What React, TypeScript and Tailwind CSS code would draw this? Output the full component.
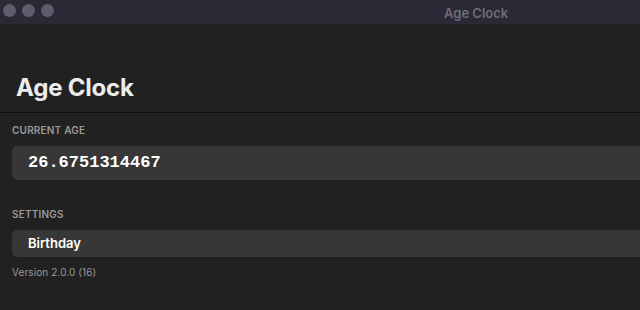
export default function App() {
  return (
    <div className="w-[640px] h-[310px] overflow-hidden bg-[#212121] flex flex-col" style={{ fontFamily: '"Inter", "Liberation Sans", sans-serif' }}>
      <div className="h-[25px] shrink-0 bg-[#2a2935] flex items-start relative border-b border-[#1c1c22]">
        <div className="flex gap-[6px] pl-[3px] pt-[4px]">
          <div className="w-[13px] h-[13px] rounded-full bg-[#5e5d6b]" />
          <div className="w-[13px] h-[13px] rounded-full bg-[#5e5d6b]" />
          <div className="w-[13px] h-[13px] rounded-full bg-[#5e5d6b]" />
        </div>
        <div className="absolute left-[444px] top-[4px] text-[13px] font-semibold text-[#6e6d7b]">Age Clock</div>
      </div>
      <div className="h-[88px] shrink-0 flex items-end pl-[16px] pb-[12px] border-b border-[#0e0e0e]">
        <div className="text-[24px] font-bold text-[#ececec] leading-none tracking-[-0.2px]">Age Clock</div>
      </div>
      <div className="pl-[12px] pt-[12px]">
        <div className="text-[10px] font-semibold text-[#9a9a9a] uppercase leading-none tracking-[0.2px]">Current Age</div>
        <div className="mt-[11px] h-[34px] rounded-l-[5px] bg-[#373737] flex items-center pl-[16px]">
          <span className="text-[17px] font-bold text-white" style={{ fontFamily: '"Liberation Mono", monospace' }}>26.6751314467</span>
        </div>
        <div className="mt-[29px] text-[10px] font-semibold text-[#9a9a9a] uppercase leading-none tracking-[0.2px]">Settings</div>
        <div className="mt-[11px] h-[27px] rounded-l-[5px] bg-[#373737] flex items-center pl-[16px]">
          <span className="text-[13px] font-semibold text-white">Birthday</span>
        </div>
        <div className="mt-[10px] text-[10px] text-[#9a9a9a] leading-none tracking-[0.1px]">Version 2.0.0 (16)</div>
      </div>
    </div>
  );
}
